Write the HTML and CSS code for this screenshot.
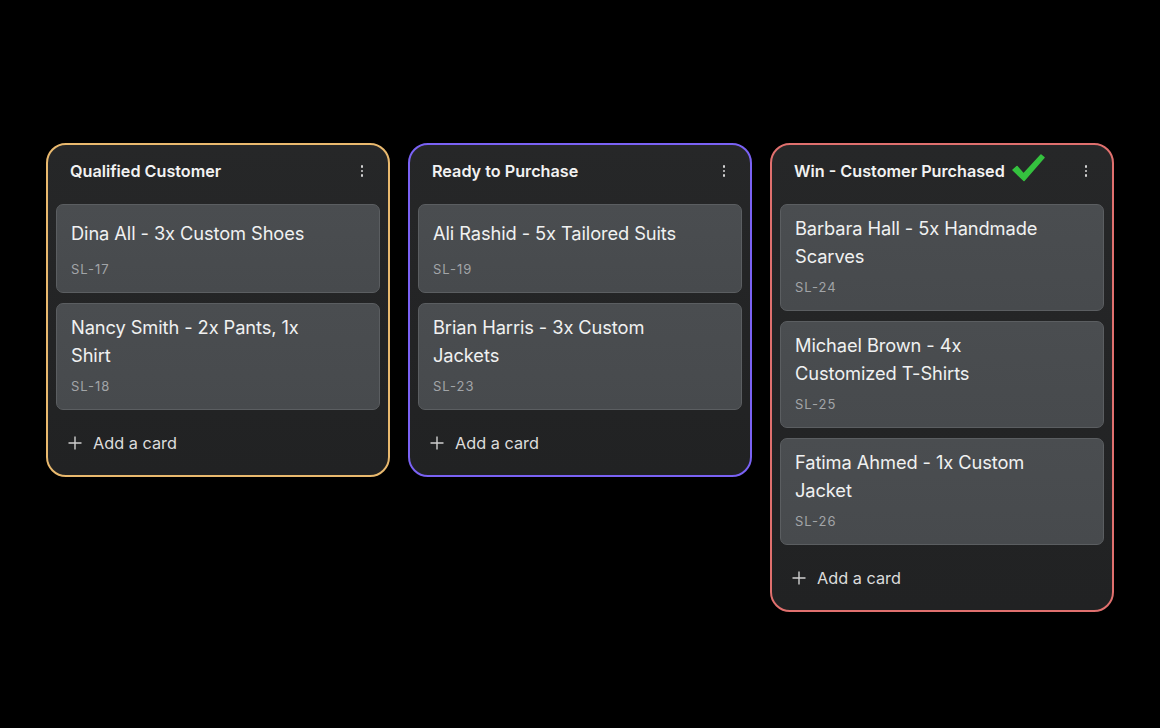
FILE: index.html
```html
<!DOCTYPE html>
<html lang="en">
<head>
<meta charset="utf-8">
<title>Board</title>
<link rel="stylesheet" href="styles.css">
</head>
<body>
<main class="board">
  <section class="column column--qualified">
    <header class="column-head">
      <h2 class="column-title">Qualified Customer</h2>
      <button class="kebab" aria-label="More"><span></span><span></span><span></span></button>
    </header>
    <div class="cards">
      <article class="card card--short">
        <p class="card-title">Dina All - 3x Custom Shoes</p>
        <p class="card-id">SL-17</p>
      </article>
      <article class="card">
        <p class="card-title">Nancy Smith - 2x Pants, 1x Shirt</p>
        <p class="card-id">SL-18</p>
      </article>
    </div>
    <button class="add-card"><svg viewBox="0 0 14 14" width="14" height="14"><path d="M7 0.5V13.5M0.5 7H13.5" stroke="currentColor" stroke-width="1.4" fill="none"/></svg><span>Add a card</span></button>
  </section>

  <section class="column column--ready">
    <header class="column-head">
      <h2 class="column-title">Ready to Purchase</h2>
      <button class="kebab" aria-label="More"><span></span><span></span><span></span></button>
    </header>
    <div class="cards">
      <article class="card card--short">
        <p class="card-title">Ali Rashid - 5x Tailored Suits</p>
        <p class="card-id">SL-19</p>
      </article>
      <article class="card">
        <p class="card-title">Brian Harris - 3x Custom Jackets</p>
        <p class="card-id">SL-23</p>
      </article>
    </div>
    <button class="add-card"><svg viewBox="0 0 14 14" width="14" height="14"><path d="M7 0.5V13.5M0.5 7H13.5" stroke="currentColor" stroke-width="1.4" fill="none"/></svg><span>Add a card</span></button>
  </section>

  <section class="column column--won">
    <header class="column-head">
      <h2 class="column-title">Win - Customer Purchased</h2>
      <svg class="check" viewBox="0 0 34 30" width="34" height="30"><path d="M2 17 L6 13.5 L12.5 21 L30 2 L33 4.5 L13 27.5 Z" fill="#35c23f" stroke="#35c23f" stroke-width="1.5" stroke-linejoin="round"/></svg>
      <button class="kebab" aria-label="More"><span></span><span></span><span></span></button>
    </header>
    <div class="cards">
      <article class="card">
        <p class="card-title">Barbara Hall - 5x Handmade Scarves</p>
        <p class="card-id">SL-24</p>
      </article>
      <article class="card">
        <p class="card-title">Michael Brown - 4x Customized T-Shirts</p>
        <p class="card-id">SL-25</p>
      </article>
      <article class="card">
        <p class="card-title">Fatima Ahmed - 1x Custom Jacket</p>
        <p class="card-id">SL-26</p>
      </article>
    </div>
    <button class="add-card"><svg viewBox="0 0 14 14" width="14" height="14"><path d="M7 0.5V13.5M0.5 7H13.5" stroke="currentColor" stroke-width="1.4" fill="none"/></svg><span>Add a card</span></button>
  </section>
</main>
</body>
</html>
```

FILE: styles.css
```css
* { box-sizing: border-box; }

html, body {
  margin: 0;
  padding: 0;
  background: #000;
  height: 100%;
}

body {
  font-family: "Inter", "Open Sans", "Liberation Sans", sans-serif;
  color: #eceded;
}

.board {
  display: flex;
  align-items: flex-start;
  gap: 18px;
  padding: 143px 0 0 46px;
}

.column {
  width: 344px;
  border: 2px solid #e9b96e;
  border-radius: 20px;
  background: linear-gradient(180deg, #262728 0%, #212223 100%);
  padding: 0 8px;
  display: flex;
  flex-direction: column;
}

.column--ready { border-color: #7a62f4; }
.column--won { border-color: #e0706e; }

.column-head {
  height: 59px;
  display: flex;
  align-items: center;
  padding: 0 11px 7px 14px;
}

.column-title {
  margin: 0;
  font-size: 16.2px;
  font-weight: 600;
  color: #f2f2f2;
  letter-spacing: 0;
}

.check {
  margin: -6px 0 0 6px;
}

.kebab {
  margin-left: auto;
  width: 14px;
  height: 16px;
  padding: 0;
  border: 0;
  background: none;
  display: flex;
  flex-direction: column;
  align-items: center;
  justify-content: center;
  gap: 2px;
}

.kebab span {
  width: 2.5px;
  height: 2.5px;
  border-radius: 50%;
  background: #d4d4d4;
}

.cards {
  display: flex;
  flex-direction: column;
  gap: 10px;
}

.card {
  background: linear-gradient(180deg, #4a4d50 0%, #474a4d 100%);
  border: 1px solid #5b5e61;
  border-radius: 7px;
  padding: 9px 15px 14px 14px;
}

.card--short {
  padding-top: 14px;
}

.card-title {
  margin: 0;
  font-size: 18.3px;
  line-height: 28px;
  font-weight: 400;
  color: #f0f1f1;
  padding-right: 30px;
  letter-spacing: -0.1px;
}

.card-id {
  margin: 8px 0 0;
  font-size: 13px;
  line-height: 18px;
  color: #a2a5a8;
  letter-spacing: 1px;
}

.card--short .card-id {
  margin-top: 13px;
}

.add-card {
  display: flex;
  align-items: center;
  gap: 11px;
  height: 65px;
  padding: 0 0 0 12px;
  border: 0;
  background: none;
  font-family: inherit;
  font-size: 16.3px;
  color: #dcdcdc;
  text-align: left;
}

.add-card svg {
  color: #cfcfcf;
}
```
